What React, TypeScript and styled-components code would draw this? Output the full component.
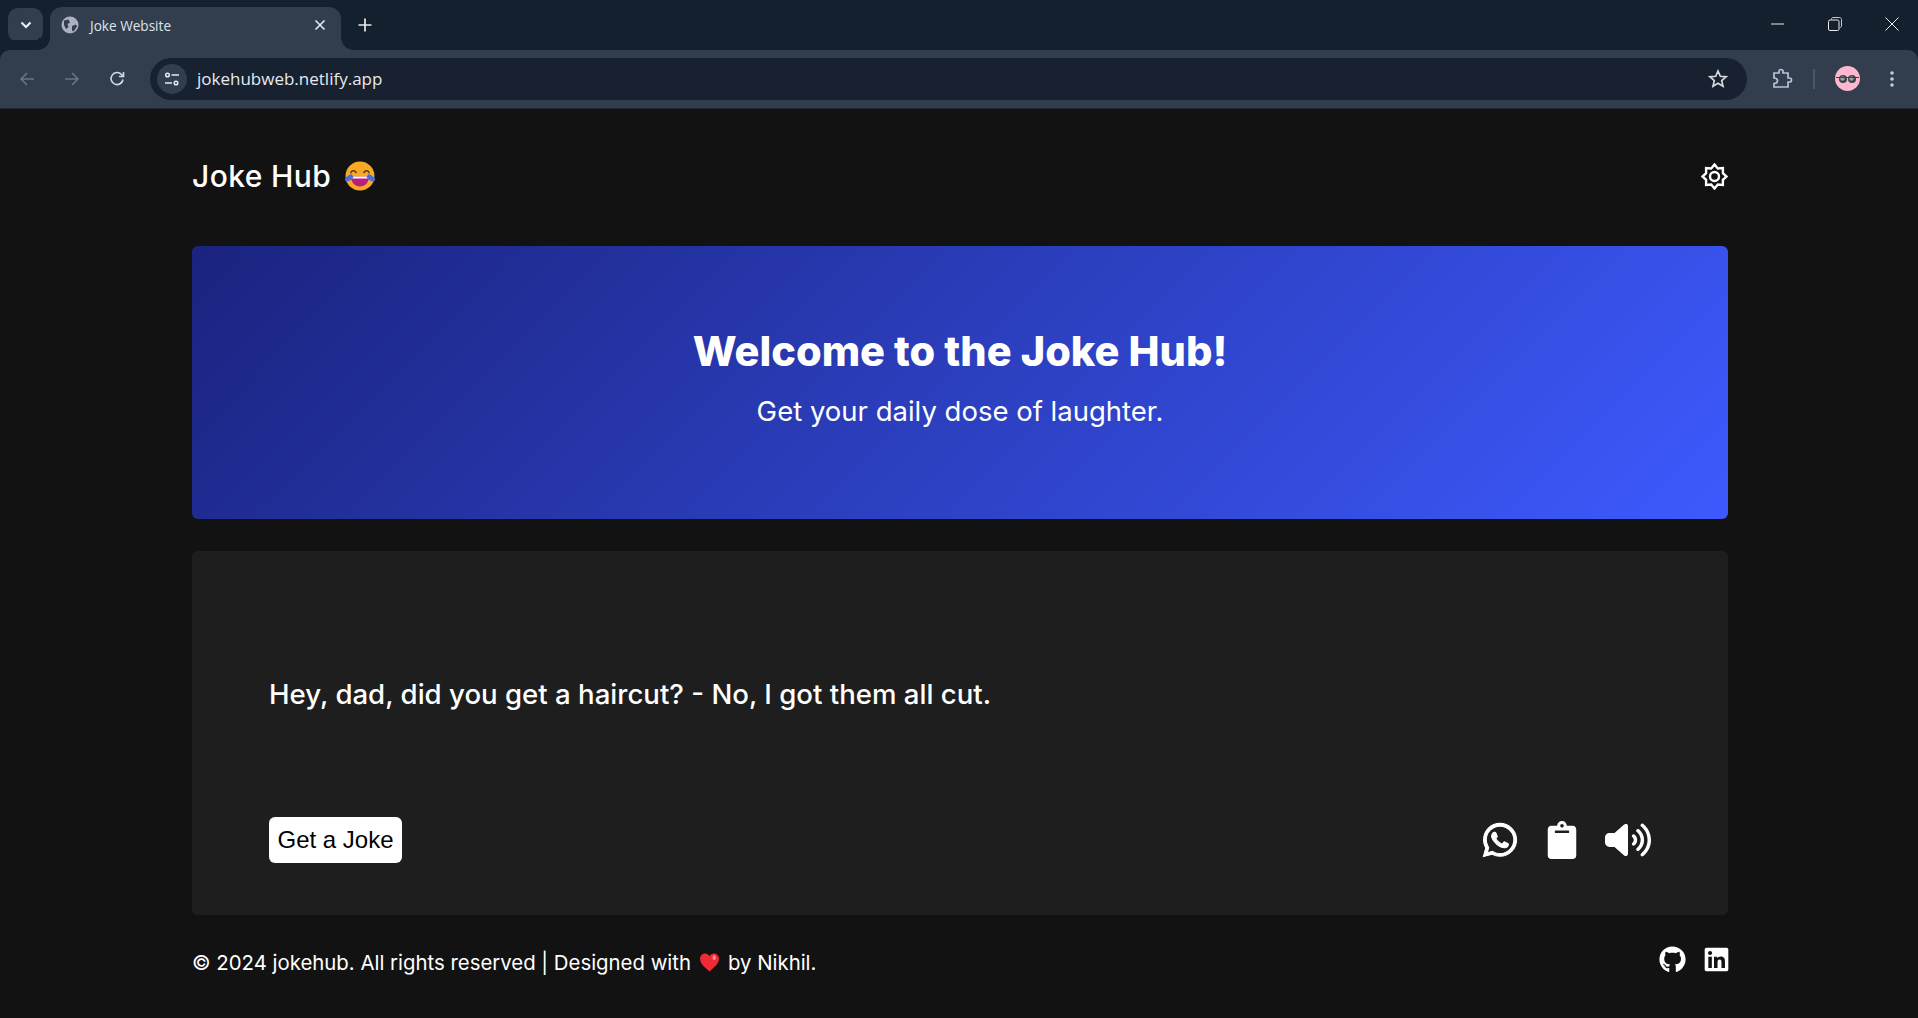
import React from "react";
import styled, { createGlobalStyle } from "styled-components";
import { FaWhatsapp, FaClipboard, FaGithub, FaLinkedin } from "react-icons/fa";
import { FaVolumeHigh } from "react-icons/fa6";

const Global = createGlobalStyle`
  html, body { margin: 0; padding: 0; height: 100%; overflow: hidden; background: #121212; }
  #root { height: 100%; }
  * { box-sizing: border-box; }
`;

const Shell = styled.div`
  display: flex;
  flex-direction: column;
  height: 1018px;
  font-family: Inter, "Noto Sans", sans-serif;
`;

const TabStrip = styled.div`
  height: 50px;
  background: #15202f;
  display: flex;
  align-items: flex-end;
  padding-left: 8px;
`;
const TabSearch = styled.div`
  width: 35px;
  height: 34px;
  margin-bottom: 8px;
  border-radius: 10px;
  background: #323d4e;
  display: flex;
  align-items: center;
  justify-content: center;
`;
const Tab = styled.div`
  position: relative;
  width: 291px;
  height: 43px;
  margin-left: 7px;
  padding: 0 15px 7px 11px;
  border-radius: 12px 12px 0 0;
  background: #323d4e;
  display: flex;
  align-items: center;
  gap: 11px;
  color: #dfe3ea;
  font: 400 13.6px "Open Sans", sans-serif;
  &::before, &::after {
    content: "";
    position: absolute;
    bottom: 0;
    width: 12px;
    height: 12px;
  }
  &::before { left: -12px; background: radial-gradient(circle at 0 0, #15202f 11.5px, #323d4e 12px); }
  &::after { right: -12px; background: radial-gradient(circle at 100% 0, #15202f 11.5px, #323d4e 12px); }
`;
const TabTitle = styled.span`
  flex: 1;
`;
const NewTab = styled.div`
  width: 28px;
  height: 28px;
  margin: 0 0 11px 10px;
  display: flex;
  align-items: center;
  justify-content: center;
`;
const WindowControls = styled.div`
  margin: 0 -2px 0 auto;
  height: 50px;
  display: flex;
  align-items: center;
  padding-bottom: 2px;
`;
const WindowButton = styled.div`
  width: 57px;
  height: 32px;
  display: flex;
  align-items: center;
  justify-content: center;
`;

const Toolbar = styled.div`
  height: 59px;
  background: #323d4e;
  border-bottom: 1px solid #1d2531;
  border-radius: 10px 10px 0 0;
  display: flex;
  align-items: center;
  padding: 0 0 1px 10px;
  box-shadow: 0 -10px 0 #15202f;
`;
const NavIcon = styled.div`
  width: 34px;
  height: 34px;
  margin-right: 11px;
  display: flex;
  align-items: center;
  justify-content: center;
`;
const Omnibox = styled.div`
  width: 1597px;
  height: 42px;
  margin-left: 5px;
  border-radius: 21px;
  background: #17212f;
  display: flex;
  align-items: center;
  padding: 0 19px 0 7px;
  color: #e8eaee;
  font: 400 17px "Open Sans", sans-serif;
`;
const SiteInfo = styled.div`
  width: 30px;
  height: 30px;
  border-radius: 50%;
  background: #323d4e;
  display: flex;
  align-items: center;
  justify-content: center;
  margin-right: 10px;
`;
const Url = styled.span`
  flex: 1;
`;
const ToolbarRight = styled.div`
  display: flex;
  align-items: center;
  margin-left: 24px;
`;
const Divider = styled.div`
  width: 2px;
  height: 20px;
  background: #4c5668;
  margin: 0 20px;
`;
const Avatar = styled.div`
  width: 25px;
  height: 25px;
  border-radius: 50%;
  background: #fbb8d0;
  margin-right: 29px;
  display: flex;
  align-items: center;
  justify-content: center;
`;

const Page = styled.main`
  flex: 1;
  background: #121212;
  color: #fff;
  padding: 0 190px 0 192px;
  display: flex;
  flex-direction: column;
`;
const Header = styled.header`
  height: 137px;
  padding-bottom: 3px;
  display: flex;
  align-items: center;
  justify-content: space-between;
  svg { display: block; }
`;
const Brand = styled.h1`
  margin: 0;
  font-size: 30px;
  font-weight: 500;
  letter-spacing: 0.4px;
  display: flex;
  align-items: center;
  gap: 13px;
`;
const Hero = styled.section`
  height: 273px;
  border-radius: 6px;
  background: linear-gradient(135deg, #1a237e, #3d5afe);
  display: flex;
  flex-direction: column;
  align-items: center;
  padding-top: 82px;
`;
const HeroTitle = styled.h2`
  margin: 0;
  font-size: 41.5px;
  line-height: 46px;
  font-weight: 800;
`;
const HeroText = styled.p`
  margin: 21px 0 0;
  font-size: 27.5px;
  line-height: 32px;
  font-weight: 400;
`;
const JokeCard = styled.section`
  height: 364px;
  margin-top: 32px;
  border-radius: 6px;
  background: #1e1e1e;
  padding: 0 77px;
  display: flex;
  flex-direction: column;
`;
const JokeText = styled.p`
  margin: 128px 0 0;
  font-size: 27.6px;
  line-height: 30px;
  font-weight: 500;
  height: 110px;
`;
const Actions = styled.div`
  display: flex;
  align-items: center;
  justify-content: space-between;
  margin-top: 28px;
`;
const JokeButton = styled.button`
  width: 133px;
  height: 46px;
  padding: 0;
  border: none;
  border-radius: 6px;
  background: #fff;
  color: #000;
  font: 400 24px "Liberation Sans", Arial, sans-serif;
`;
const ShareIcons = styled.div`
  display: flex;
  align-items: center;
  gap: 24px;
  color: #fff;
  svg { display: block; }
  svg:first-child { stroke: currentColor; stroke-width: 14px; }
`;
const Footer = styled.footer`
  display: flex;
  justify-content: space-between;
  align-items: center;
  height: 62px;
  margin-top: 16px;
`;
const Copy = styled.p`
  margin: 0;
  font-size: 20.37px;
  font-weight: 400;
  display: flex;
  align-items: center;
  gap: 8px;
`;
const Social = styled.div`
  display: flex;
  align-items: center;
  gap: 17px;
  font-size: 27px;
  margin-right: -2px;
  padding-bottom: 6px;
  svg { display: block; }
`;

const LaughEmoji = () => (
  <svg width="32" height="32" viewBox="0 0 32 32">
    <circle cx="16" cy="16" r="14.5" fill="#f9a825" />
    <path d="M7 12.5c1-2.4 4-2.4 5 0M20 12.5c1-2.4 4-2.4 5 0" stroke="#5d3a12" strokeWidth="1.6" fill="none" strokeLinecap="round" />
    <path d="M7 16.5h18c0 6-4 10-9 10s-9-4-9-10z" fill="#b81f7d" />
    <path d="M8 16.5h16v2H8z" fill="#fff" />
    <path d="M1 19c2-3 4-4 6.500-5l2 3c-1.500 2-3 4-6 4.500-2 0-3-1-2.500-2.500zM31 19c-2-3-4-4-6.500-5l-2 3c1.500 2 3 4 6 4.500 2 0 3-1 2.500-2.500z" fill="#4a6ee0" />
  </svg>
);

const HeartEmoji = () => (
  <svg width="21" height="21" viewBox="0 0 20 20">
    <path d="M10 18.500C4 13.500 1 10.500 1 6.500 1 3.500 3.300 1.500 5.700 1.500 7.500 1.500 9.100 2.500 10 4c.9-1.500 2.500-2.500 4.300-2.500C16.700 1.500 19 3.500 19 6.500c0 4-3 7-9 12z" fill="#ee2a35" />
    <ellipse cx="14.500" cy="5.500" rx="1.600" ry="2.300" fill="#ff8a8f" />
  </svg>
);

const Globe = () => (
  <svg width="18" height="18" viewBox="0 0 18 18">
    <circle cx="9" cy="9" r="8.500" fill="#aab2bf" />
    <path d="M3 4.500 7.500 3.500 9 6.500 6.500 8 7.500 11 5 13 3 9zM11 10l4-1.500 1 2-3.500 5-1.500-1z" fill="#323d4e" />
  </svg>
);

/* Eight-pointed sun outline used as the theme toggle */
const StarGear = () => (
  <svg width="27" height="27" viewBox="0 0 27 27">
    <path
      d="M13.500 1.500 16.800 5.500 21.900 5.100 21.900 10.200 25.500 13.500 21.900 16.800 21.900 21.900 16.800 21.500 13.500 25.500 10.200 21.500 5.100 21.900 5.100 16.800 1.500 13.500 5.100 10.200 5.100 5.100 10.200 5.500z"
      stroke="#fff"
      strokeWidth="2.400"
      strokeLinejoin="miter"
      fill="none"
    />
    <circle cx="13.500" cy="13.500" r="4.500" stroke="#fff" strokeWidth="2.400" fill="none" />
  </svg>
);

export default function App() {
  return (
    <Shell>
      <Global />
      <TabStrip>
        <TabSearch>
          <svg width="12" height="8" viewBox="0 0 12 8"><path d="M1.500 1.500 6 6l4.500-4.500" stroke="#f1f3f6" strokeWidth="2" fill="none" /></svg>
        </TabSearch>
        <Tab>
          <Globe />
          <TabTitle>Joke Website</TabTitle>
          <svg width="12" height="12" viewBox="0 0 12 12"><path d="M1.500 1.500l9 9m0-9l-9 9" stroke="#e8eaee" strokeWidth="1.600" /></svg>
        </Tab>
        <NewTab>
          <svg width="14" height="14" viewBox="0 0 14 14"><path d="M7 .5v13M.5 7h13" stroke="#e8eaee" strokeWidth="1.700" /></svg>
        </NewTab>
        <WindowControls>
          <WindowButton><svg width="14" height="2" viewBox="0 0 14 2"><path d="M0 1h13" stroke="#e8eaee" /></svg></WindowButton>
          <WindowButton><svg width="14" height="14" viewBox="0 0 14 14"><path d="M3.500 2.500V2c0-.8.700-1.500 1.500-1.500h6.500c1 0 2 1 2 2V9c0 .8-.7 1.500-1.500 1.500" stroke="#c8ccd3" fill="none" /><rect x=".5" y="3" width="10.500" height="10.500" rx="1.500" stroke="#e8eaee" fill="none" /></svg></WindowButton>
          <WindowButton><svg width="14" height="14" viewBox="0 0 14 14"><path d="M.5.500l13 13m0-13l-13 13" stroke="#e8eaee" /></svg></WindowButton>
        </WindowControls>
      </TabStrip>
      <Toolbar>
        <NavIcon><svg width="16" height="16" viewBox="0 0 16 16"><path d="M15 8H2M8 2 2 8l6 6" stroke="#6b7584" strokeWidth="1.500" fill="none" /></svg></NavIcon>
        <NavIcon><svg width="16" height="16" viewBox="0 0 16 16"><path d="M1 8h13M8 2l6 6-6 6" stroke="#6b7584" strokeWidth="1.500" fill="none" /></svg></NavIcon>
        <NavIcon><svg width="16" height="16" viewBox="0 0 16 16"><path d="M14 8.500A6 6 0 1 1 12.500 3.500L14.500 5.500M14.500 1v4.500H10" stroke="#d5d9df" strokeWidth="1.600" fill="none" /></svg></NavIcon>
        <Omnibox>
          <SiteInfo>
            <svg width="16" height="16" viewBox="0 0 16 16"><g stroke="#e8eaee" strokeWidth="1.500" fill="none"><circle cx="3.500" cy="4" r="1.800" /><path d="M7.500 4H15M1 12h7" /><circle cx="12" cy="12" r="1.800" /></g></svg>
          </SiteInfo>
          <Url>jokehubweb.netlify.app</Url>
          <svg width="20" height="20" viewBox="0 0 20 20"><path d="m10 2 2.300 5.300 5.700.5-4.300 3.800 1.300 5.600-5-3-5 3 1.300-5.600L2 7.800l5.700-.5z" stroke="#d5d9df" strokeWidth="1.700" fill="none" /></svg>
        </Omnibox>
        <ToolbarRight>
          <svg width="22" height="22" viewBox="0 0 22 22"><path d="M3 5h5V3.500a2 2 0 0 1 4 0V5h5v5h1.500a2 2 0 0 1 0 4H17v5H3v-3.500c2 0 3.500-1 3.500-2.700S5 10 3 10z" stroke="#b7c3d8" strokeWidth="1.700" fill="none" /></svg>
          <Divider />
          <Avatar>
            <svg width="23" height="10" viewBox="0 0 23 10"><circle cx="7" cy="5" r="4" fill="#3c4146" /><circle cx="16" cy="5" r="4" fill="#3c4146" /><circle cx="6.500" cy="4.500" r="2.200" fill="#9aa0a3" /><circle cx="15.500" cy="4.500" r="2.200" fill="#9aa0a3" /><path d="M0 3.500h23" stroke="#3c4146" /></svg>
          </Avatar>
          <svg width="6" height="18" viewBox="0 0 6 18"><circle cx="3" cy="3" r="1.800" fill="#c3cde0" /><circle cx="3" cy="9" r="1.800" fill="#c3cde0" /><circle cx="3" cy="15" r="1.800" fill="#c3cde0" /></svg>
        </ToolbarRight>
      </Toolbar>
      <Page>
        <Header>
          <Brand>Joke Hub <LaughEmoji /></Brand>
          <StarGear />
        </Header>
        <Hero>
          <HeroTitle>Welcome to the Joke Hub!</HeroTitle>
          <HeroText>Get your daily dose of laughter.</HeroText>
        </Hero>
        <JokeCard>
          <JokeText>Hey, dad, did you get a haircut? - No, I got them all cut.</JokeText>
          <Actions>
            <JokeButton>Get a Joke</JokeButton>
            <ShareIcons>
              <FaWhatsapp size={38} />
              <FaClipboard size={38} />
              <FaVolumeHigh size={46} />
            </ShareIcons>
          </Actions>
        </JokeCard>
        <Footer>
          <Copy>© 2024 jokehub. All rights reserved | Designed with <HeartEmoji /> by Nikhil.</Copy>
          <Social>
            <FaGithub />
            <FaLinkedin />
          </Social>
        </Footer>
      </Page>
    </Shell>
  );
}
